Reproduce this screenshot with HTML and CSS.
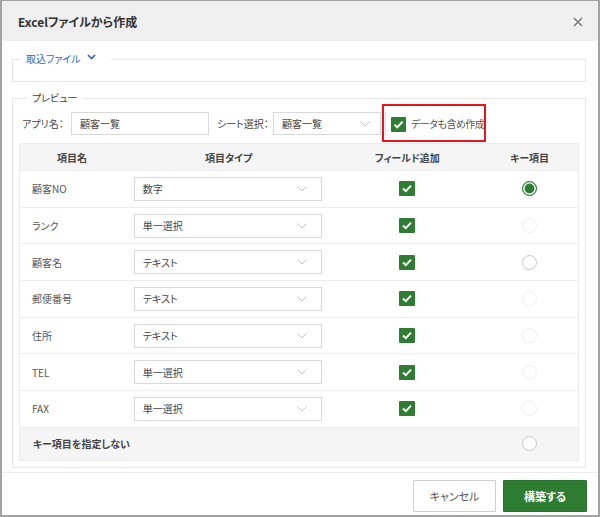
FILE: index.html
```html
<!DOCTYPE html>
<html lang="ja">
<head>
<meta charset="utf-8">
<link rel="stylesheet" href="styles.css">
</head>
<body>
<div class="modal">
  <div class="modal-header">
    <span class="title">Excelファイルから作成</span>
    <svg class="close" width="10" height="10" viewBox="0 0 10 10"><path d="M1 1L9 9M9 1L1 9" stroke="#7a7a7a" stroke-width="1.5" fill="none"/></svg>
  </div>
  <div class="modal-body">
    <fieldset class="fs fs-file">
      <legend class="lg-file">取込ファイル<svg class="chev-blue" width="9" height="6" viewBox="0 0 9 6"><path d="M1 1L4.5 4.5L8 1" stroke="#2f67c2" stroke-width="1.6" fill="none"/></svg></legend>
    </fieldset>
    <fieldset class="fs fs-preview">
      <legend class="lg-preview">プレビュー</legend>
      <div class="toolbar">
        <span class="tb-label app-label">アプリ名：</span>
        <div class="input app-input">顧客一覧</div>
        <span class="tb-label sheet-label">シート選択：</span>
        <div class="input sheet-select">顧客一覧<svg class="chev" width="10" height="6" viewBox="0 0 10 6"><path d="M0.5 0.5L5 5L9.5 0.5" stroke="#c4c4c4" stroke-width="1" fill="none"/></svg></div>
        <div class="data-opt">
          <span class="cb cb-big"><svg width="15" height="15" viewBox="0 0 15 15"><path d="M3.5 7.6L6.3 10.3L11.6 4.6" stroke="#fff" stroke-width="2" fill="none"/></svg></span>
          <span class="data-text">データも含め作成</span>
          <span class="highlight"></span>
        </div>
      </div>
      <div class="table">
        <div class="tr th">
          <div class="c1">項目名</div>
          <div class="c2">項目タイプ</div>
          <div class="c3">フィールド追加</div>
          <div class="c4">キー項目</div>
        </div>
        <div class="tr">
          <div class="c1 name">顧客NO</div>
          <div class="c2"><div class="input type-select">数字<svg class="chev" width="10" height="6" viewBox="0 0 10 6"><path d="M0.5 0.5L5 5L9.5 0.5" stroke="#c4c4c4" stroke-width="1" fill="none"/></svg></div></div>
          <div class="c3"><span class="cb"><svg width="16" height="15" viewBox="0 0 16 15"><path d="M4 7.6L6.8 10.2L12 4.6" stroke="#fff" stroke-width="2" fill="none"/></svg></span></div>
          <div class="c4"><span class="radio on"></span></div>
        </div>
        <div class="tr">
          <div class="c1 name">ランク</div>
          <div class="c2"><div class="input type-select">単一選択<svg class="chev" width="10" height="6" viewBox="0 0 10 6"><path d="M0.5 0.5L5 5L9.5 0.5" stroke="#c4c4c4" stroke-width="1" fill="none"/></svg></div></div>
          <div class="c3"><span class="cb"><svg width="16" height="15" viewBox="0 0 16 15"><path d="M4 7.6L6.8 10.2L12 4.6" stroke="#fff" stroke-width="2" fill="none"/></svg></span></div>
          <div class="c4"><span class="radio off"></span></div>
        </div>
        <div class="tr">
          <div class="c1 name">顧客名</div>
          <div class="c2"><div class="input type-select">テキスト<svg class="chev" width="10" height="6" viewBox="0 0 10 6"><path d="M0.5 0.5L5 5L9.5 0.5" stroke="#c4c4c4" stroke-width="1" fill="none"/></svg></div></div>
          <div class="c3"><span class="cb"><svg width="16" height="15" viewBox="0 0 16 15"><path d="M4 7.6L6.8 10.2L12 4.6" stroke="#fff" stroke-width="2" fill="none"/></svg></span></div>
          <div class="c4"><span class="radio"></span></div>
        </div>
        <div class="tr">
          <div class="c1 name">郵便番号</div>
          <div class="c2"><div class="input type-select">テキスト<svg class="chev" width="10" height="6" viewBox="0 0 10 6"><path d="M0.5 0.5L5 5L9.5 0.5" stroke="#c4c4c4" stroke-width="1" fill="none"/></svg></div></div>
          <div class="c3"><span class="cb"><svg width="16" height="15" viewBox="0 0 16 15"><path d="M4 7.6L6.8 10.2L12 4.6" stroke="#fff" stroke-width="2" fill="none"/></svg></span></div>
          <div class="c4"><span class="radio off"></span></div>
        </div>
        <div class="tr">
          <div class="c1 name">住所</div>
          <div class="c2"><div class="input type-select">テキスト<svg class="chev" width="10" height="6" viewBox="0 0 10 6"><path d="M0.5 0.5L5 5L9.5 0.5" stroke="#c4c4c4" stroke-width="1" fill="none"/></svg></div></div>
          <div class="c3"><span class="cb"><svg width="16" height="15" viewBox="0 0 16 15"><path d="M4 7.6L6.8 10.2L12 4.6" stroke="#fff" stroke-width="2" fill="none"/></svg></span></div>
          <div class="c4"><span class="radio off"></span></div>
        </div>
        <div class="tr">
          <div class="c1 name">TEL</div>
          <div class="c2"><div class="input type-select">単一選択<svg class="chev" width="10" height="6" viewBox="0 0 10 6"><path d="M0.5 0.5L5 5L9.5 0.5" stroke="#c4c4c4" stroke-width="1" fill="none"/></svg></div></div>
          <div class="c3"><span class="cb"><svg width="16" height="15" viewBox="0 0 16 15"><path d="M4 7.6L6.8 10.2L12 4.6" stroke="#fff" stroke-width="2" fill="none"/></svg></span></div>
          <div class="c4"><span class="radio off"></span></div>
        </div>
        <div class="tr">
          <div class="c1 name">FAX</div>
          <div class="c2"><div class="input type-select">単一選択<svg class="chev" width="10" height="6" viewBox="0 0 10 6"><path d="M0.5 0.5L5 5L9.5 0.5" stroke="#c4c4c4" stroke-width="1" fill="none"/></svg></div></div>
          <div class="c3"><span class="cb"><svg width="16" height="15" viewBox="0 0 16 15"><path d="M4 7.6L6.8 10.2L12 4.6" stroke="#fff" stroke-width="2" fill="none"/></svg></span></div>
          <div class="c4"><span class="radio off"></span></div>
        </div>
        <div class="tr tf">
          <div class="nokey">キー項目を指定しない</div>
          <div class="c4"><span class="radio"></span></div>
        </div>
      </div>
    </fieldset>
  </div>
  <div class="modal-footer">
    <button class="btn btn-cancel">キャンセル</button>
    <button class="btn btn-primary">構築する</button>
  </div>
</div>
</body>
</html>
```
FILE: styles.css
```css
* { box-sizing: border-box; }
html, body { margin: 0; padding: 0; background: #fff; }
body {
  font-family: "Noto Sans CJK JP", "Noto Sans", sans-serif;
  font-feature-settings: "palt";
  color: #555;
  font-size: 10px;
}
.modal {
  width: 600px;
  height: 517px;
  border: 2px solid #a3a3a3;
  border-top-width: 1px;
  display: flex;
  flex-direction: column;
  background: #fff;
}
.modal-header {
  height: 40px;
  background: #efefef;
  display: flex;
  align-items: center;
  justify-content: space-between;
  padding: 0 15px 0 16px;
  flex: none;
}
.title {
  font-size: 12px;
  font-weight: bold;
  color: #333;
}
.close { margin-top: 2px; }
.modal-body {
  flex: 1;
  padding: 10px 12px 0 10px;
}
.fs {
  margin: 0;
  border: 1px solid #e6e6e6;
  min-width: 0;
}
.fs-file {
  height: 31px;
  padding: 0;
}
.lg-file {
  margin-left: 8px;
  padding: 0 5px;
  color: #2f67c2;
  font-size: 10px;
  line-height: 16px;
}
.chev-blue {
  margin-left: 6px;
  vertical-align: top;
  margin-top: 3px;
  margin-right: 10px;
}
.fs-preview {
  margin-top: 8px;
  padding: 0 6px 6px 6px;
}
.lg-preview {
  margin-left: 8px;
  padding: 0 5px;
  font-size: 10px;
  line-height: 16px;
  color: #444;
}
.toolbar {
  height: 35px;
  display: flex;
  align-items: center;
  padding-left: 3px;
}
.tb-label { color: #444; flex: none; white-space: nowrap; }
.app-label { width: 49px; }
.input {
  height: 23px;
  border: 1px solid #d9d9d9;
  background: #fff;
  display: flex;
  align-items: center;
  padding-left: 8px;
  color: #444;
  position: relative;
  flex: none;
}
.app-input { width: 138px; }
.sheet-label { margin-left: 8px; width: 56px; }
.sheet-select { width: 108px; }
.chev { position: absolute; right: 10px; top: 8px; }
.type-select .chev { right: 14px; }
.data-opt {
  position: relative;
  display: flex;
  align-items: center;
  height: 23px;
  margin-left: 4px;
  padding-left: 5px;
  border-left: 1px solid #e0e0e0;
}
.data-text { margin-left: 5px; color: #555; white-space: nowrap; letter-spacing: -0.5px; }
.highlight {
  position: absolute;
  left: -4px;
  top: -8px;
  width: 104px;
  height: 38px;
  border: 2px solid #e8141b;
}
.cb {
  display: inline-block;
  width: 16px;
  height: 15px;
  background: #2e7d32;
  border-radius: 1px;
  line-height: 0;
}
.cb-big { width: 15px; height: 15px; margin-top: 1px; }
.table {
  margin-top: 2px;
  border: 1px solid #ececec;
}
.tr {
  display: flex;
  align-items: center;
  height: 36.7px;
  border-top: 1px solid #ededed;
}
.th {
  height: 26px;
  border-top: none;
  background: #f5f5f5;
  color: #444;
  font-weight: bold;
}
.th > div { text-align: center; }
.c1 { width: 104px; padding-left: 12px; }
.th .c1 { padding-left: 0; }
.c2 { width: 210px; padding-left: 10px; }
.th .c2 { padding-left: 0; }
.c3 { width: 148px; display: flex; justify-content: center; }
.c4 { width: 97px; display: flex; justify-content: center; }
.name { color: #555; }
.type-select { width: 188px; height: 24px; }
.radio {
  width: 15px;
  height: 15px;
  border-radius: 50%;
  border: 1px solid #c6c6c6;
  background: #fff;
}
.radio.off { border-color: #efefef; }
.radio.on {
  border-color: #2e7d32;
  background: #2e7d32;
  box-shadow: inset 0 0 0 1.6px #fff;
}
.tf {
  height: 33px;
  background: #f5f5f5;
}
.nokey {
  width: 462px;
  padding-left: 13px;
  font-weight: bold;
  color: #444;
}
.modal-footer {
  flex: none;
  border-top: 1px solid #ececec;
  padding: 7px 11px 3px 0;
  display: flex;
  justify-content: flex-end;
  gap: 7px;
}
.btn {
  height: 32px;
  font-family: "Noto Sans CJK JP", "Noto Sans", sans-serif;
  font-feature-settings: "palt";
  font-size: 11px;
  border-radius: 1px;
  cursor: pointer;
}
.btn-cancel {
  width: 83px;
  background: #fff;
  border: 1px solid #cfcfcf;
  color: #555;
}
.btn-primary {
  width: 84px;
  background: #2e7d32;
  border: 1px solid #2a722e;
  color: #fff;
  font-weight: bold;
}
```
